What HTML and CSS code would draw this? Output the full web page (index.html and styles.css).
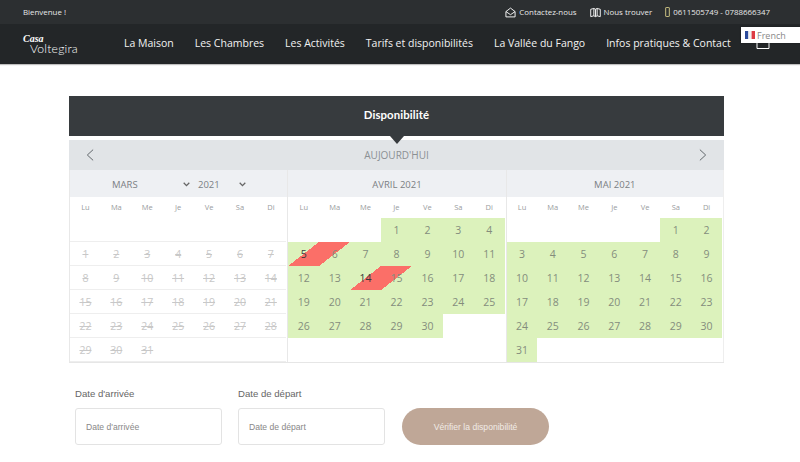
FILE: index.html
```html
<!DOCTYPE html>
<html lang="fr">
<head>
    <meta charset="UTF-8">
    <title>Disponibilité - Casa Voltegira</title>
    <link rel="stylesheet" href="styles.css">
</head>
<body>
<div class="topbar">
    <span>Bienvenue !</span>
    <ul class="top-links">
        <li>
            <svg width="11" height="11" viewBox="0 0 12 12" fill="none" stroke="#fff"><path d="M1 5 6 1.2 11 5v5.8H1zM1 5l5 3.4L11 5"/></svg>
            Contactez-nous
        </li>
        <li>
            <svg width="11" height="11" viewBox="0 0 12 12" fill="none" stroke="#fff"><path d="M.8 2.5 4.2 1.6 6 2.5l1.8-.9 3.4.9v8L7.8 9.6 6 10.5l-1.8-.9-3.4.9zM4.2 1.6v8M7.8 1.6v8M6 2.5v8"/></svg>
            Nous trouver
        </li>
        <li>
            <svg width="5" height="10" viewBox="0 0 5 11" fill="none" stroke="#d9cf8a"><rect x=".5" y=".5" width="4" height="10" rx=".6"/></svg>
            0611505749 - 0788666347
        </li>
    </ul>
</div>
<header class="navbar">
    <a class="logo"><em>Casa</em><span>Voltegira</span></a>
    <nav class="menu">
        <a>La Maison</a>
        <a>Les Chambres</a>
        <a>Les Activités</a>
        <a>Tarifs et disponibilités</a>
        <a>La Vallée du Fango</a>
        <a>Infos pratiques &amp; Contact</a>
    </nav>
    <svg class="basket" width="14" height="10" viewBox="0 0 14 10" fill="none" stroke="#fff"><path d="M1 .5v9h12V.5"/></svg>
    <div class="lang">
        <svg width="10" height="8" viewBox="0 0 10 8"><rect width="3.4" height="8" fill="#2b4a9b"/><rect x="3.4" width="3.2" height="8" fill="#f2f2f2"/><rect x="6.6" width="3.4" height="8" fill="#dd3b43"/></svg>
        French
    </div>
</header>

<main class="booking">
    <h1 class="cal-title">Disponibilité</h1>
    <div class="cal-nav">
        <svg width="8" height="14" viewBox="0 0 9 14" fill="none" stroke="#5f6569" stroke-width="1.1"><path d="M8 1 1.5 7 8 13"/></svg>
        <span>AUJOURD'HUI</span>
        <svg width="8" height="14" viewBox="0 0 9 14" fill="none" stroke="#5f6569" stroke-width="1.1"><path d="M1 1l6.5 6L1 13"/></svg>
    </div>
    <div class="months">
        <section class="month">
            <div class="month-name month-select">
                <span class="sel-month">MARS</span>
                <svg width="7" height="5" viewBox="0 0 7 5" fill="none" stroke="#666" stroke-width="1.3"><path d="M.7.8 3.5 3.6 6.3.8"/></svg>
                <span class="sel-year">2021</span>
                <svg width="7" height="5" viewBox="0 0 7 5" fill="none" stroke="#666" stroke-width="1.3"><path d="M.7.8 3.5 3.6 6.3.8"/></svg>
            </div>
            <div class="days">
                <b>Lu</b><b>Ma</b><b>Me</b><b>Je</b><b>Ve</b><b>Sa</b><b>Di</b>
                <i></i><i></i><i></i><i></i><i></i><i></i><i></i>
                <i class="past">1</i><i class="past">2</i><i class="past">3</i><i class="past">4</i><i class="past">5</i><i class="past">6</i><i class="past">7</i>
                <i class="past">8</i><i class="past">9</i><i class="past">10</i><i class="past">11</i><i class="past">12</i><i class="past">13</i><i class="past">14</i>
                <i class="past">15</i><i class="past">16</i><i class="past">17</i><i class="past">18</i><i class="past">19</i><i class="past">20</i><i class="past">21</i>
                <i class="past">22</i><i class="past">23</i><i class="past">24</i><i class="past">25</i><i class="past">26</i><i class="past">27</i><i class="past">28</i>
                <i class="past">29</i><i class="past">30</i><i class="past">31</i><i></i><i></i><i></i><i></i>
            </div>
        </section>
        <section class="month">
            <div class="month-name">AVRIL 2021</div>
            <div class="days">
                <b>Lu</b><b>Ma</b><b>Me</b><b>Je</b><b>Ve</b><b>Sa</b><b>Di</b>
                <i class="none"></i><i class="none"></i><i class="none"></i><i class="free">1</i><i class="free">2</i><i class="free">3</i><i class="free">4</i>
                <i class="free start">5</i><i class="free end">6</i><i class="free">7</i><i class="free">8</i><i class="free">9</i><i class="free">10</i><i class="free">11</i>
                <i class="free">12</i><i class="free">13</i><i class="free start">14</i><i class="free end">15</i><i class="free">16</i><i class="free">17</i><i class="free">18</i>
                <i class="free">19</i><i class="free">20</i><i class="free">21</i><i class="free">22</i><i class="free">23</i><i class="free">24</i><i class="free">25</i>
                <i class="free">26</i><i class="free">27</i><i class="free">28</i><i class="free">29</i><i class="free">30</i><i class="none"></i><i class="none"></i>
                <i class="none"></i><i class="none"></i><i class="none"></i><i class="none"></i><i class="none"></i><i class="none"></i><i class="none"></i>
            </div>
        </section>
        <section class="month">
            <div class="month-name">MAI 2021</div>
            <div class="days">
                <b>Lu</b><b>Ma</b><b>Me</b><b>Je</b><b>Ve</b><b>Sa</b><b>Di</b>
                <i class="none"></i><i class="none"></i><i class="none"></i><i class="none"></i><i class="none"></i><i class="free">1</i><i class="free">2</i>
                <i class="free">3</i><i class="free">4</i><i class="free">5</i><i class="free">6</i><i class="free">7</i><i class="free">8</i><i class="free">9</i>
                <i class="free">10</i><i class="free">11</i><i class="free">12</i><i class="free">13</i><i class="free">14</i><i class="free">15</i><i class="free">16</i>
                <i class="free">17</i><i class="free">18</i><i class="free">19</i><i class="free">20</i><i class="free">21</i><i class="free">22</i><i class="free">23</i>
                <i class="free">24</i><i class="free">25</i><i class="free">26</i><i class="free">27</i><i class="free">28</i><i class="free">29</i><i class="free">30</i>
                <i class="free">31</i><i class="none"></i><i class="none"></i><i class="none"></i><i class="none"></i><i class="none"></i><i class="none"></i>
            </div>
        </section>
    </div>
    <form class="check-form">
        <label class="field">Date d'arrivée
            <input type="text" placeholder="Date d'arrivée">
        </label>
        <label class="field">Date de départ
            <input type="text" placeholder="Date de départ">
        </label>
        <button type="button">Vérifier la disponibilité</button>
    </form>
</main>
</body>
</html>
```

FILE: styles.css
```css
* {
    box-sizing: border-box;
}

body {
    margin: 0;
    height: 462px;
    overflow: hidden;
    background: #fff;
    font-family: "Open Sans", "Liberation Sans", sans-serif;
}

.topbar {
    height: 24px;
    padding: 0 30px 0 23px;
    display: flex;
    align-items: center;
    justify-content: space-between;
    background: #2c2f31;
    color: #e8e8e8;
    font-size: 7.9px;
}

.top-links {
    display: flex;
    gap: 13px;
    margin: 0;
    padding: 0;
    list-style: none;
}

.top-links li {
    display: flex;
    align-items: center;
    gap: 3px;
}

.navbar {
    position: relative;
    height: 40px;
    padding-left: 23px;
    display: flex;
    align-items: center;
    background: #232628;
    box-shadow: 0 1px 1px rgba(0, 0, 0, .25);
}

.logo {
    width: 101px;
    flex: none;
    display: flex;
    flex-direction: column;
    color: #fff;
}

.logo em {
    font: italic bold 10px "Liberation Serif", serif;
    line-height: 8px;
}

.logo span {
    margin: 1px 0 0 7px;
    font: 300 12.2px Lato, sans-serif;
    line-height: 9px;
    letter-spacing: .2px;
}

.menu {
    display: flex;
    gap: 21px;
    flex: none;
    padding-bottom: 2px;
    color: #f2f2f2;
    font-size: 10.5px;
    white-space: nowrap;
}

.basket {
    flex: none;
    margin-left: 25px;
}

.lang {
    position: absolute;
    top: 3px;
    right: 0;
    width: 59px;
    height: 16px;
    padding-left: 4px;
    display: flex;
    align-items: center;
    gap: 2px;
    background: #fff;
    color: #888;
    font-size: 9px;
    box-shadow: 0 0 2px rgba(0, 0, 0, .3);
}

.booking {
    width: 655px;
    margin: 32px 0 0 69px;
}

.cal-title {
    position: relative;
    height: 40px;
    margin: 0;
    padding-bottom: 3px;
    display: flex;
    align-items: center;
    justify-content: center;
    background: #373b3e;
    color: #fff;
    font: 700 11.4px Lato, sans-serif;
    letter-spacing: .1px;
}

.cal-title::after {
    content: "";
    position: absolute;
    left: 321px;
    bottom: -8px;
    border: 7px solid transparent;
    border-bottom: 0;
    border-top: 8px solid #373b3e;
}

.cal-nav {
    height: 30px;
    margin-top: 4px;
    padding: 0 17px;
    display: flex;
    align-items: center;
    justify-content: space-between;
    background: #e1e4e7;
    color: #8b9094;
    font-size: 10px;
}

.months {
    display: grid;
    grid-template-columns: repeat(3, 1fr);
    border-bottom: 1px solid #e6e6e6;
}

.month {
    border-left: 1px solid #e8e8e8;
}

.month:last-child {
    border-right: 1px solid #eee;
}

.month-name {
    height: 27px;
    padding-top: 1px;
    display: flex;
    align-items: center;
    justify-content: center;
    background: #eef0f3;
    color: #7b7f83;
    font-size: 9.5px;
}

.month-select {
    justify-content: flex-start;
    padding-left: 42px;
}

.sel-month {
    width: 71px;
}

.sel-year {
    width: 41px;
    margin-left: 8px;
}

.days {
    display: grid;
    grid-template-columns: repeat(7, 1fr);
    grid-template-rows: 21px;
    grid-auto-rows: 24px;
    margin-right: 1px;
}

.days b,
.days i {
    display: flex;
    align-items: center;
    justify-content: center;
    font-style: normal;
    font-weight: 400;
}

.days b {
    height: 21px;
    padding-bottom: 1px;
    color: #9a9da0;
    font-size: 7.5px;
}

.days i {
    border-bottom: 1px solid #eee;
    font-size: 10.5px;
    color: #777;
}

.days .past {
    color: #c8c8c8;
    text-decoration: line-through;
}

.days .none {
    border-color: transparent;
}

.days .free {
    background: #dcf2bc;
    border-color: #dcf2bc;
    color: #848d7c;
}

.days .start {
    background: linear-gradient(to bottom right, #dcf2bc 50%, #fb6f68 50%);
    border: 0;
    color: #3a3a3a;
}

.days .end {
    background: linear-gradient(to bottom right, #fb6f68 50%, #dcf2bc 50%);
    border: 0;
}

.check-form {
    margin: 25px 0 0 6px;
    display: flex;
    align-items: flex-end;
    gap: 16px;
}

.field {
    width: 147px;
    display: flex;
    flex-direction: column;
    gap: 9px;
    color: #666;
    font: 9.6px "Liberation Sans", sans-serif;
}

.field input {
    height: 37px;
    padding: 0 10px;
    border: 1px solid #e3e3e3;
    border-radius: 3px;
    font: 8.6px "Liberation Sans", sans-serif;
    outline: 0;
}

.field input::placeholder {
    color: #888;
}

button {
    width: 147px;
    height: 37px;
    margin-left: 1px;
    border: 0;
    border-radius: 19px;
    background: #bfa797;
    color: #f1ebe6;
    font: 8.6px "Liberation Sans", sans-serif;
}
```
